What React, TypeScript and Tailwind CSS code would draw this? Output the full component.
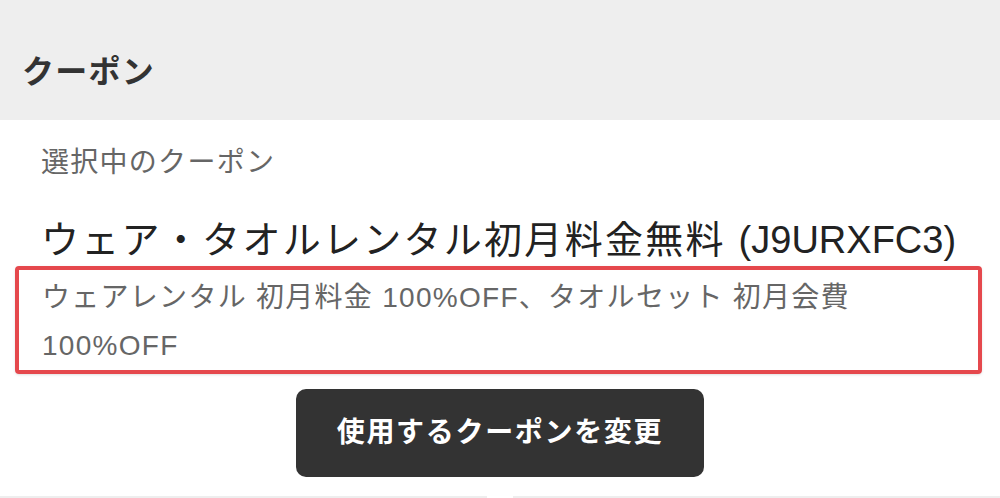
import React from "react";

const font = { fontFamily: '"Liberation Sans", "Noto Sans CJK JP", "Noto Sans", sans-serif' };

const coupon = {
    code: "J9URXFC3",
    name: "ウェア・タオルレンタル初月料金無料",
    description: "ウェアレンタル 初月料金 100%OFF、タオルセット 初月会費 100%OFF",
};

const App = () => {
    return (
        <div className="w-[1000px] h-[498px] bg-white overflow-hidden tracking-[0.08em]" style={font}>
            <div className="h-[120px] bg-[#eeeeee] pt-[52px] px-[22px]">
                <h1 className="text-[32px] leading-[40px] font-bold text-[#333333]">クーポン</h1>
            </div>

            <div className="px-[41px] pt-[25px]">
                <p className="text-[28px] leading-[36px] text-[#666666]">選択中のクーポン</p>
                <h2 className="mt-[35px] text-[38px] leading-[48px] text-[#222222] tracking-[0.06em] whitespace-nowrap">
                    {coupon.name} <span className="tracking-normal">({coupon.code})</span>
                </h2>
                <div className="mt-[2px] -ml-[26px] -mr-[23px] border-4 border-[#e5484d] rounded-[4px] shadow-sm pt-[4px] pl-[23px] pr-[60px]">
                    <p className="text-[28px] leading-[48px] text-[#666666]">{coupon.description}</p>
                </div>
                <div className="flex justify-center mt-[15px]">
                    <button className="w-[408px] h-[88px] bg-[#333333] rounded-[10px] text-white text-[28px] font-bold tracking-[0.06em]">
                        使用するクーポンを変更
                    </button>
                </div>
            </div>

            <div className="flex mt-[19px] h-[2px]">
                <div className="flex-1 bg-[#eeeeee]"></div>
                <div className="w-[26px]"></div>
                <div className="flex-1 bg-[#eeeeee]"></div>
            </div>
        </div>
    );
};

export default App;
